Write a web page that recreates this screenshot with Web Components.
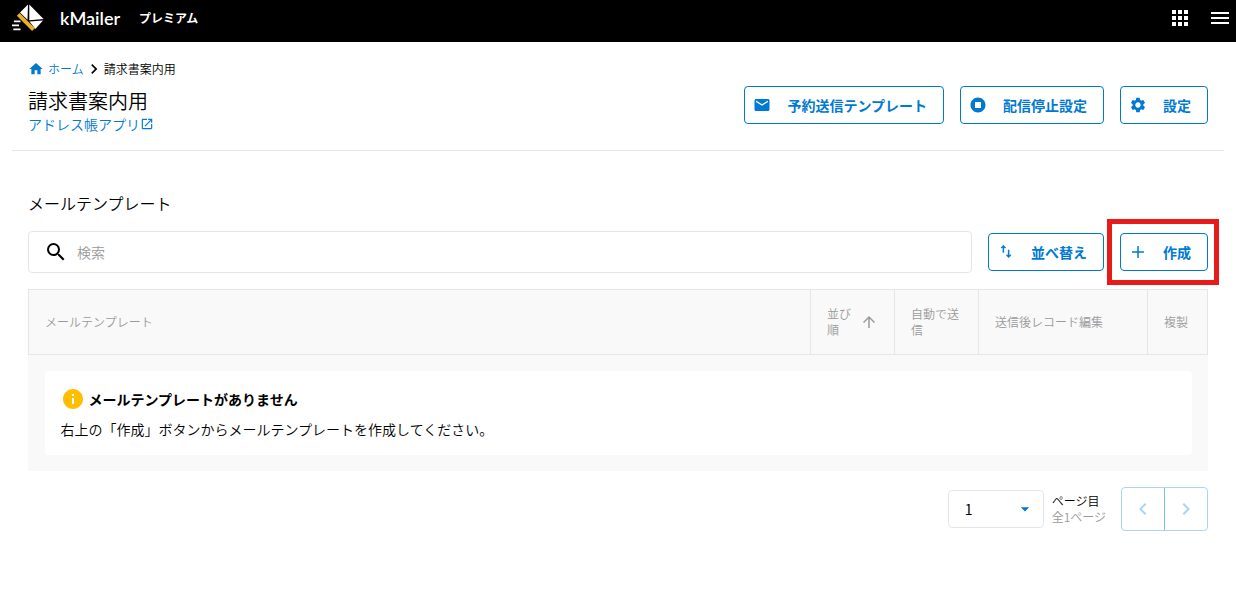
<!DOCTYPE html>
<html lang="ja">
<head>
<meta charset="utf-8">
<meta name="viewport" content="width=device-width, initial-scale=1">
<title>kMailer</title>
<style>
body {
    margin: 0;
    background: #fff;
    color: #000;
    font-family: "Noto Sans CJK JP", "Noto Sans", sans-serif;
    font-size: 14px;
    font-weight: 350;
    line-height: 20px;
    --blue: #0079d3;
    --line: #e6e6e6;
    --muted: #999;
    --panel: #f9f9f9;
}
</style>
</head>
<body>

<mailer-header plan="プレミアム"></mailer-header>

<page-heading heading="請求書案内用">
    <icon-button icon="mail">予約送信テンプレート</icon-button>
    <icon-button icon="stop">配信停止設定</icon-button>
    <icon-button icon="gear">設定</icon-button>
</page-heading>

<template-section heading="メールテンプレート">
    <search-box slot="tools" placeholder="検索"></search-box>
    <icon-button slot="tools" icon="sort">並べ替え</icon-button>
    <high-light slot="tools"><icon-button icon="plus">作成</icon-button></high-light>
    <template-table>
        <empty-message heading="メールテンプレートがありません">右上の「作成」ボタンからメールテンプレートを作成してください。</empty-message>
    </template-table>
    <page-nav pages="1"></page-nav>
</template-section>

<script>
//ICONS - all on a 24 x 24 grid, filled with the text colour
const icons = {
    home: `<path d="M10 20v-6h4v6h5v-8h3L12 3 2 12h3v8z"/>`,
    next: `<path d="M10 6 8.600 7.400 13.200 12l-4.600 4.600L10 18l6-6z"/>`,
    prev: `<path d="M15.400 7.400 14 6l-6 6 6 6 1.400-1.400L10.800 12z"/>`,
    open: `<path d="M19 19H5V5h7V3H5c-1.100 0-2 .9-2 2v14c0 1.100.9 2 2 2h14c1.100 0 2-.9 2-2v-7h-2v7zM14 3v2h3.600l-9.800 9.800 1.400 1.400L19 6.400V10h2V3h-7z"/>`,
    mail: `<path d="M20 4H4c-1.100 0-2 .9-2 2v12c0 1.100.9 2 2 2h16c1.100 0 2-.9 2-2V6c0-1.100-.9-2-2-2zm0 4-8 5-8-5V6l8 5 8-5v2z"/>`,
    stop: `<path d="M12 2C6.500 2 2 6.500 2 12s4.500 10 10 10 10-4.500 10-10S17.500 2 12 2zm4 14H8V8h8v8z"/>`,
    gear: `<path d="M19.140 12.940c.04-.3.060-.61.060-.94 0-.32-.02-.64-.07-.94l2.030-1.580c.18-.14.23-.41.120-.61l-1.920-3.320c-.12-.22-.37-.29-.59-.22l-2.390.96c-.5-.38-1.030-.7-1.620-.94l-.36-2.540c-.04-.24-.24-.41-.48-.41h-3.840c-.24 0-.43.17-.47.41l-.36 2.540c-.59.24-1.130.57-1.620.94l-2.390-.96c-.22-.08-.47 0-.59.22L2.740 8.870c-.12.21-.08.47.120.61l2.030 1.580c-.05.3-.09.63-.09.94s.02.640.070.94l-2.030 1.580c-.18.140-.23.410-.12.61l1.920 3.320c.12.220.37.290.59.220l2.390-.96c.5.380 1.030.7 1.620.94l.36 2.540c.05.240.24.410.48.410h3.840c.24 0 .44-.17.47-.41l.36-2.540c.59-.24 1.130-.56 1.620-.94l2.390.96c.22.080.47 0 .59-.22l1.920-3.320c.12-.22.070-.47-.12-.61l-2.010-1.580zM12 15.600c-1.980 0-3.600-1.620-3.600-3.600s1.620-3.600 3.600-3.600 3.600 1.620 3.600 3.600-1.620 3.600-3.600 3.600z"/>`,
    sort: `<path d="M8.500 2.500 5 6l1.300 1.300 1.200-1.200V13h2V6.100l1.200 1.200L12 6zM16.500 9h-2v7.300l-1.200-1.200L12 16.400l3.500 3.600 3.500-3.600-1.300-1.300-1.200 1.200z"/>`,
    plus: `<path d="M20 13h-7v7h-2v-7H4v-2h7V4h2v7h7z"/>`,
    search: `<path d="M15.500 14h-.79l-.28-.27A6.470 6.470 0 0 0 16 9.500 6.500 6.500 0 1 0 9.500 16c1.610 0 3.090-.59 4.230-1.570l.27.280v.79l5 4.990L20.490 19l-4.990-5zm-6 0C7.010 14 5 11.990 5 9.500S7.010 5 9.500 5 14 7.010 14 9.500 11.990 14 9.500 14z"/>`,
    up: `<path d="m4 12 1.400 1.400L11 7.800V20h2V7.800l5.600 5.600L20 12l-8-8z"/>`,
    info: `<path d="M12 2C6.480 2 2 6.480 2 12s4.480 10 10 10 10-4.480 10-10S17.520 2 12 2zm1 15h-2v-6h2v6zm0-8h-2V7h2v2z"/>`,
    down: `<path d="m7 10 5 5 5-5z"/>`,
    apps: `<path d="M4 8h4V4H4zm6 12h4v-4h-4zm-6 0h4v-4H4zm0-6h4v-4H4zm6 0h4v-4h-4zm6-10v4h4V4zm-6 4h4V4h-4zm6 6h4v-4h-4zm0 6h4v-4h-4z"/>`,
    menu: `<path d="M3 18h18v-2H3zm0-5h18v-2H3zm0-7v2h18V6z"/>`
};

function icon(name, size) {
    return `<svg width="${size}" height="${size}" viewBox="0 0 24 24" fill="currentColor" aria-hidden="true">${icons[name]}</svg>`;
}

//Styles that every shadow root starts with
const base = `
:host, *, *::before, *::after { box-sizing: border-box; }
svg { display: block; flex: none; }
button, input, select { margin: 0; font: inherit; color: inherit; }
button { padding: 0; border: none; background: none; cursor: pointer; }
a { color: var(--blue); text-decoration: none; }
h1, h2, h3, p { margin: 0; font-weight: inherit; }
`;

class BaseElement extends HTMLElement {
    constructor() {
        super();
        this.attachShadow({mode: "open"});
    }

    connectedCallback() {
        this.shadowRoot.innerHTML = `<style>${base}</style>${this.render()}`;
    }
}

//Black bar with the logo and the plan name
class MailerHeader extends BaseElement {
    render() {
        return `
<style>
:host { display: flex; align-items: center; height: 42px; padding: 0 4px 6px 12px; background: #000; color: #fff; }
.brand { display: flex; align-items: center; gap: 16px; color: #fff; font: 600 18px/24px Lato, sans-serif; }
.plan { margin-left: 19px; font-size: 12px; font-weight: 700; }
nav { display: flex; gap: 16px; margin-left: auto; }
</style>
<a class="brand" href="#">
    <svg width="32" height="30" viewBox="0 0 32 30" aria-hidden="true">
        <path fill="#fff" d="M16 1.500 8 9.500l7.500 7.300zM17.300 1.500 31.500 16l-14.200 1.200zM17.500 18.600l13.500-1-7.700 8.400z"/>
        <path fill="none" stroke="#e9ae2b" stroke-width="4" d="m6.200 11.400 15.300 15.200"/>
        <path fill="none" stroke="#fff" stroke-width="1.600" d="M2 18.400h6.500M0 22.400h7M1.300 26.400h7.200"/>
    </svg>
    <span>kMailer</span>
</a>
<span class="plan">${this.getAttribute("plan")}</span>
<nav>
    <button type="button" aria-label="アプリ一覧">${icon("apps", 24)}</button>
    <button type="button" aria-label="メニュー">${icon("menu", 24)}</button>
</nav>`;
    }
}
customElements.define("mailer-header", MailerHeader);

//Breadcrumb, title and the buttons of the page
class PageHeading extends BaseElement {
    render() {
        const heading = this.getAttribute("heading");
        return `
<style>
:host { display: flex; align-items: flex-start; justify-content: space-between; margin: 0 12px; padding: 16px; border-bottom: 1px solid var(--line); }
.crumbs { display: flex; align-items: center; font-size: 12px; line-height: 22px; }
.crumbs a { display: flex; align-items: center; gap: 4px; }
h1 { font-size: 20px; line-height: 24px; margin: 9px 0 1px; }
.app { display: flex; align-items: center; font-size: 14px; line-height: 20px; }
.actions { display: flex; gap: 16px; margin-top: 28px; }
</style>
<div>
    <nav class="crumbs"><a href="#">${icon("home", 16)}ホーム</a>${icon("next", 20)}<span>${heading}</span></nav>
    <h1>${heading}</h1>
    <a class="app" href="#">アドレス帳アプリ${icon("open", 14)}</a>
</div>
<div class="actions"><slot></slot></div>`;
    }
}
customElements.define("page-heading", PageHeading);

//Outlined button with an icon before its text
class IconButton extends BaseElement {
    render() {
        return `
<style>
:host { display: block; flex: none; }
button { display: flex; align-items: center; gap: 16px; height: 38px; padding: 0 16px 0 8px; border: 1px solid var(--blue); border-radius: 4px; background: #fff; color: var(--blue); font-weight: 700; }
</style>
<button type="button">${icon(this.getAttribute("icon"), 18)}<span><slot></slot></span></button>`;
    }
}
customElements.define("icon-button", IconButton);

//Red frame drawn over the page around its content
class HighLight extends BaseElement {
    render() {
        return `
<style>
:host { display: block; flex: none; position: relative; }
:host::after { content: ""; position: absolute; inset: -14px -11px -14px -13px; border: 5px solid #e81a1a; pointer-events: none; }
</style>
<slot></slot>`;
    }
}
customElements.define("high-light", HighLight);

class SearchBox extends BaseElement {
    render() {
        const text = this.getAttribute("placeholder");
        return `
<style>
:host { display: block; flex: 1; }
label { display: flex; align-items: center; gap: 9px; height: 42px; padding: 0 15px; border: 1px solid var(--line); border-radius: 4px; }
input { flex: 1; min-width: 0; padding: 0; border: none; outline: none; background: none; }
input::placeholder { color: var(--muted); opacity: 1; }
</style>
<label>${icon("search", 24)}<input type="search" placeholder="${text}" aria-label="${text}"></label>`;
    }
}
customElements.define("search-box", SearchBox);

class TemplateSection extends BaseElement {
    render() {
        return `
<style>
:host { display: flex; flex-direction: column; gap: 16px; padding: 40px 28px; }
h2 { font-size: 16px; line-height: 24px; }
.tools { display: flex; align-items: center; gap: 16px; }
</style>
<h2>${this.getAttribute("heading")}</h2>
<div class="tools"><slot name="tools"></slot></div>
<slot></slot>`;
    }
}
customElements.define("template-section", TemplateSection);

class TemplateTable extends BaseElement {
    render() {
        return `
<style>
:host { display: block; }
table { width: 100%; table-layout: fixed; border-collapse: collapse; background: var(--panel); }
th { height: 65px; padding: 0 16px; border: 1px solid var(--line); color: var(--muted); font-size: 12px; font-weight: inherit; line-height: 16px; text-align: left; }
td { padding: 16px; }
.short { width: 84px; }
.edit { width: 169px; }
.copy { width: 60px; padding-right: 0; }
.sort { display: flex; align-items: center; justify-content: space-between; gap: 8px; }
</style>
<table>
    <thead>
        <tr>
            <th>メールテンプレート</th>
            <th class="short"><div class="sort"><span>並び順</span>${icon("up", 18)}</div></th>
            <th class="short">自動で送信</th>
            <th class="edit">送信後レコード編集</th>
            <th class="copy">複製</th>
        </tr>
    </thead>
    <tbody>
        <tr><td colspan="5"><slot></slot></td></tr>
    </tbody>
</table>`;
    }
}
customElements.define("template-table", TemplateTable);

class EmptyMessage extends BaseElement {
    render() {
        return `
<style>
:host { display: block; padding: 16px; border-radius: 4px; background: #fff; }
h3 { display: flex; align-items: center; gap: 4px; font-size: 14px; font-weight: 700; line-height: 24px; }
h3 svg { color: #ffbf00; }
p { margin-top: 8px; line-height: 20px; }
</style>
<h3>${icon("info", 24)}${this.getAttribute("heading")}</h3>
<p><slot></slot></p>`;
    }
}
customElements.define("empty-message", EmptyMessage);

//Page select with the previous and next buttons
class PageNav extends BaseElement {
    render() {
        const pages = Number(this.getAttribute("pages"));
        let options = "";
        for (let i = 1; i <= pages; i++) {
            options += `<option>${i}</option>`;
        }
        return `
<style>
:host { display: flex; align-items: center; justify-content: flex-end; }
.select { display: grid; align-items: center; width: 96px; height: 38px; }
.select > * { grid-area: 1 / 1; }
.select svg { justify-self: end; margin-right: 9px; color: var(--blue); pointer-events: none; }
select { appearance: none; width: 100%; height: 100%; padding: 0 16px; border: 1px solid var(--line); border-radius: 4px; background: #fff; font-weight: 400; }
.text { display: flex; flex-direction: column; margin: 0 15px 0 8px; font-size: 12px; line-height: 16px; }
.total { color: var(--muted); }
.step { display: flex; border: 1px solid #a9d4f3; border-radius: 4px; }
.step button { display: flex; align-items: center; justify-content: center; box-sizing: content-box; width: 42px; height: 42px; color: #a9d4f3; }
.step button + button { border-left: 1px solid #7fbfea; }
</style>
<div class="select"><select id="page">${options}</select>${icon("down", 20)}</div>
<div class="text"><label for="page">ページ目</label><span class="total">全${pages}ページ</span></div>
<div class="step">
    <button type="button" disabled aria-label="前のページ">${icon("prev", 24)}</button>
    <button type="button" disabled aria-label="次のページ">${icon("next", 24)}</button>
</div>`;
    }
}
customElements.define("page-nav", PageNav);
</script>
</body>
</html>
